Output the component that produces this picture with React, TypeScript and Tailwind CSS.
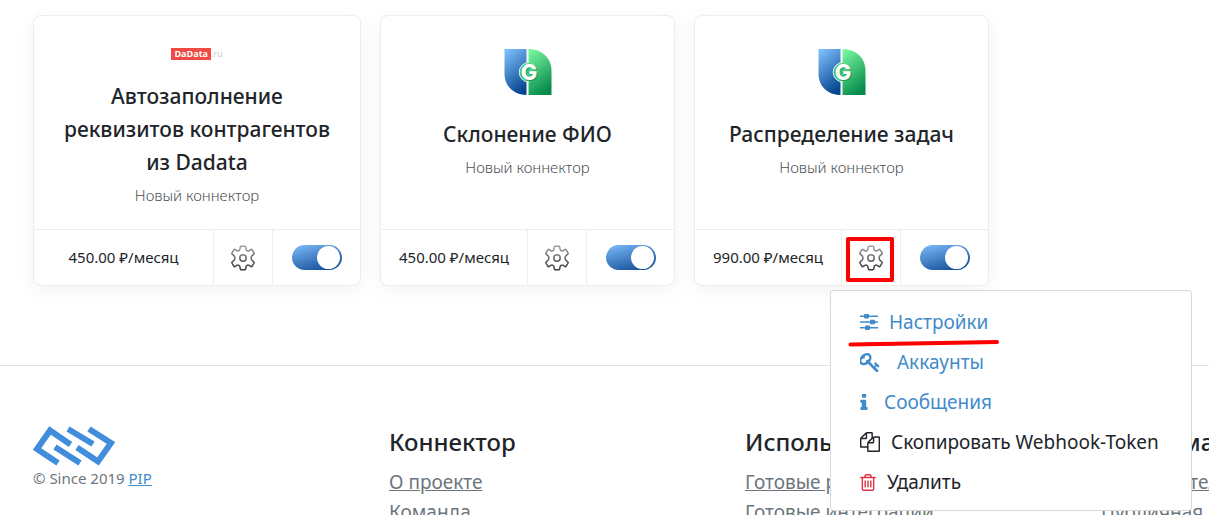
import React, { useId } from 'react';

type LogoKind = 'dadata' | 'google';

interface Connector {
  title: string;
  price: string;
  logo: LogoKind;
  width: string;
  menuOpen?: boolean;
}

const connectors: Connector[] = [
  { title: 'Автозаполнение реквизитов контрагентов из Dadata', price: '450.00 ₽/месяц', logo: 'dadata', width: 'w-[328px]' },
  { title: 'Склонение ФИО', price: '450.00 ₽/месяц', logo: 'google', width: 'w-[295px]' },
  { title: 'Распределение задач', price: '990.00 ₽/месяц', logo: 'google', width: 'w-[295px]', menuOpen: true },
];

const footerColumns = [
  { title: 'Коннектор', links: ['О проекте', 'Команда'] },
  { title: 'Использование', links: ['Готовые решения', 'Готовые интеграции'] },
  { title: 'Информация', links: ['Пользовательское соглашение', 'Публичная оферта'] },
];

const GearIcon: React.FC = () => {
  const id = useId();
  return (
    <svg viewBox="0 0 26 26" className="h-[26px] w-[26px]" fill="none" aria-hidden="true">
      <defs>
        <linearGradient id={id} x1="0" y1="0" x2="0" y2="26" gradientUnits="userSpaceOnUse">
          <stop offset="0" stopColor="#a3a3a3" />
          <stop offset="1" stopColor="#333333" />
        </linearGradient>
      </defs>
      <g stroke={`url(#${id})`} strokeWidth="1.5" strokeLinejoin="round">
        <path d="M11.2 1.200h3.600q.8 0 .9.800l.4 2.400q.2 1.100 1.300 1.400 1 .4 1.800-.2l1.800-1.100q.8-.4 1.200.3l1.800 3.100q.4.700-.2 1.200l-1.700 1.500q-1 .9-1 2.400t1 2.400l1.700 1.500q.6.500.2 1.200l-1.800 3.100q-.4.700-1.200.3l-1.800-1.100q-.8-.6-1.800-.2-1.100.3-1.300 1.400l-.4 2.400q-.1.800-.9.800h-3.600q-.8 0-.9-.8l-.4-2.400q-.2-1.100-1.300-1.400-1-.4-1.800.2l-1.800 1.100q-.8.400-1.200-.3l-1.800-3.100q-.4-.7.2-1.200l1.700-1.500q1-.9 1-2.400t-1-2.400l-1.700-1.500q-.6-.5-.2-1.200l1.800-3.100q.4-.7 1.200-.3l1.800 1.100q.8.600 1.800.2 1.100-.3 1.300-1.400l.4-2.400q.1-.8.900-.8z" />
        <circle cx="13" cy="13" r="3.200" />
      </g>
    </svg>
  );
};

const DadataLogo: React.FC = () => (
  <div className="flex h-3 items-center font-['Open_Sans',sans-serif] text-[9px] leading-3">
    <span className="bg-[#ef4a44] px-[3px] font-bold text-white">DaData</span>
    <span className="text-[#c9c9c9]">.ru</span>
  </div>
);

const GoogleLogo: React.FC = () => {
  const id = useId();
  return (
    <svg viewBox="0 0 48 48" className="h-12 w-12" aria-hidden="true">
      <defs>
        <linearGradient id={`${id}b`} x1="0.2" y1="0" x2="0.6" y2="1">
          <stop offset="0" stopColor="#7dbcfb" />
          <stop offset="1" stopColor="#04458f" />
        </linearGradient>
        <linearGradient id={`${id}g`} x1="0.2" y1="0" x2="0.6" y2="1">
          <stop offset="0" stopColor="#78f59d" />
          <stop offset="1" stopColor="#058a4b" />
        </linearGradient>
      </defs>
      <path d="M0.500 1h22v46C9.500 47 0.500 38 0.500 26z" fill={`url(#${id}b)`} />
      <path d="M24.500 1c13.500 0 23 9 23 22v24h-23z" fill={`url(#${id}g)`} />
      <path d="M25 14.500a9.800 9.800 0 0 0 0 19.600" fill="#3fc47c" stroke="#e4f7ec" strokeWidth="1" />
      <text x="26" y="33" textAnchor="middle" fontSize="22" fontWeight="800" fontFamily="Inter, sans-serif" fill="#0a7f48" opacity=".5">G</text>
      <text x="25" y="32" textAnchor="middle" fontSize="22" fontWeight="800" fontFamily="Inter, sans-serif" fill="#fff">G</text>
    </svg>
  );
};

const menuItems = [
  {
    label: 'Настройки',
    tone: 'text-[#428bca]',
    box: 'w-[18px]',
    icon: (
      <svg viewBox="0 0 18 16" className="h-4 w-[18px]" fill="currentColor">
        <path d="M0 1.500h18v1.400H0zM0 7.300h18v1.400H0zM0 13.100h18v1.400H0z" />
        <rect x="4" y="0" width="5" height="4.400" rx=".8" />
        <rect x="10" y="5.800" width="5" height="4.400" rx=".8" />
        <rect x="5" y="11.600" width="5" height="4.400" rx=".8" />
      </svg>
    ),
  },
  {
    label: 'Аккаунты',
    tone: 'text-[#428bca]',
    box: 'w-[26px]',
    icon: (
      <svg viewBox="109 128 1574 1574" className="h-[19px] w-5" fill="currentColor">
        <path d="M832 512q0-80-56-136t-136-56-136 56-56 136q0 42 19 83-41-19-83-19-80 0-136 56t-56 136 56 136 136 56 136-56 56-136q0-42-19-83 41 19 83 19 80 0 136-56t56-136zm851 704q0 17-49 66t-66 49q-9 0-28.500-16t-36.500-33-38.500-40-24.500-26l-96 96 220 220q28 28 28 68 0 42-39 81t-81 39q-40 0-68-28l-671-671q-176 131-365 131-163 0-265.500-102.500t-102.500-265.500q0-160 95-313t248-248 313-95q163 0 265.500 102.500t102.500 265.500q0 189-131 365l355 355 96-96q-3-3-26-24.500t-40-38.500-33-36.500-16-28.500q0-17 49-66t66-49q13 0 23 10 6 6 46 44.500t82 79.500 86.500 86 73 78 28.500 41z" />
      </svg>
    ),
  },
  {
    label: 'Сообщения',
    tone: 'text-[#428bca]',
    box: 'w-[13px]',
    icon: (
      <svg viewBox="576 128 640 1408" className="h-4 w-2" fill="currentColor">
        <path d="M1216 1344v128q0 26-19 45t-45 19h-512q-26 0-45-19t-19-45v-128q0-26 19-45t45-19h64v-384h-64q-26 0-45-19t-19-45v-128q0-26 19-45t45-19h384q26 0 45 19t19 45v576h64q26 0 45 19t19 45zm-128-1152v192q0 26-19 45t-45 19h-256q-26 0-45-19t-19-45v-192q0-26 19-45t45-19h256q26 0 45 19t19 45z" />
      </svg>
    ),
  },
  {
    label: 'Скопировать Webhook-Token',
    tone: 'text-[#212529]',
    box: 'w-5',
    icon: (
      <svg viewBox="0 0 1792 1792" className="h-5 w-5" fill="currentColor">
        <path d="M1696 384q40 0 68 28t28 68v1216q0 40-28 68t-68 28h-960q-40 0-68-28t-28-68v-288h-544q-40 0-68-28t-28-68v-672q0-40 20-88t48-76l408-408q28-28 76-48t88-20h416q40 0 68 28t28 68v328q68-40 128-40h416zm-544 213l-299 299h299v-299zm-640-384l-299 299h299v-299zm196 647l316-316v-416h-384v416q0 40-28 68t-68 28h-416v640h512v-256q0-40 20-88t48-76zm956 804v-1152h-384v416q0 40-28 68t-68 28h-416v640h896z" />
      </svg>
    ),
  },
  {
    label: 'Удалить',
    tone: 'text-[#212529]',
    box: 'w-4',
    icon: (
      <svg viewBox="192 128 1408 1536" className="h-[17px] w-4 text-[#dc3545]" fill="currentColor">
        <path d="M704 736v576q0 14-9 23t-23 9h-64q-14 0-23-9t-9-23v-576q0-14 9-23t23-9h64q14 0 23 9t9 23zm256 0v576q0 14-9 23t-23 9h-64q-14 0-23-9t-9-23v-576q0-14 9-23t23-9h64q14 0 23 9t9 23zm256 0v576q0 14-9 23t-23 9h-64q-14 0-23-9t-9-23v-576q0-14 9-23t23-9h64q14 0 23 9t9 23zm128 724v-948h-896v948q0 22 7 40.500t14.500 27 10.500 8.500h832q3 0 10.500-8.500t14.500-27 7-40.500zm-672-1076h448l-48-117q-7-9-17-11h-317q-10 2-17 11zm928 32v64q0 14-9 23t-23 9h-96v948q0 83-47 143.500t-113 60.500h-832q-66 0-113-58.500t-47-141.500v-952h-96q-14 0-23-9t-9-23v-64q0-14 9-23t23-9h309l70-167q15-37 54-63t79-26h320q40 0 79 26t54 63l70 167h309q14 0 23 9t9 23z" />
      </svg>
    ),
  },
];

const SettingsMenu: React.FC = () => (
  <div className="absolute -left-3 top-[60px] z-20 w-[362px] rounded-[4px] border border-black/15 bg-white pb-2 pt-[11px] text-[19px] leading-10">
    {menuItems.map((item) => (
      <button key={item.label} type="button" className={`flex h-10 w-full items-center gap-[11px] pl-[29px] ${item.tone}`}>
        <span className={`flex shrink-0 ${item.box}`}>{item.icon}</span>
        <span className="whitespace-nowrap">{item.label}</span>
      </button>
    ))}
    <svg viewBox="0 0 152 8" className="pointer-events-none absolute left-[17px] top-12 h-2 w-[152px]" fill="none">
      <path d="M2.500 5.500C50 5 100 4 149 3" stroke="#fe0000" strokeWidth="4" strokeLinecap="round" />
    </svg>
  </div>
);

const ConnectorCard: React.FC<{ connector: Connector }> = ({ connector }) => (
  <article
    className={`flex shrink-0 flex-col rounded-lg border border-[#ededed] bg-white shadow-[0_5px_20px_rgba(0,0,0,0.05)] ${connector.width}`}
  >
    <div className="flex h-[213px] flex-col items-center px-5 pt-8 text-center">
      {connector.logo === 'dadata' ? <DadataLogo /> : <GoogleLogo />}
      <h3
        className={`text-[21px] font-medium leading-[33px] text-[#212529] ${connector.logo === 'dadata' ? 'mt-5' : 'mt-[22px]'}`}
      >
        {connector.title}
      </h3>
      <p className="mt-1 text-[15px] font-light leading-6 text-[#4b5055]">Новый коннектор</p>
    </div>
    <div className="flex h-14 border-t border-[#ededed]">
      <div className="flex flex-1 items-center justify-center text-[15px] text-[#212529]">{connector.price}</div>
      <div className="relative flex w-[59px] border-l border-[#ededed]">
        <button type="button" aria-label="Настройки коннектора" className="flex flex-1 items-center justify-center">
          <GearIcon />
        </button>
        {connector.menuOpen && (
          <>
            <span className="pointer-events-none absolute bottom-[3px] left-1 right-1.5 top-[7px] rounded-[2px] border-4 border-[#fe0000]" />
            <SettingsMenu />
          </>
        )}
      </div>
      <label className="relative flex w-[88px] items-center justify-center border-l border-[#ededed]">
        <input
          type="checkbox"
          defaultChecked
          aria-label={connector.title}
          className="h-[25px] w-[50px] appearance-none rounded-full bg-linear-165 from-[#7dbcfb] to-[#04458f]"
        />
        <span className="pointer-events-none absolute right-5 h-[23px] w-[23px] rounded-full bg-white" />
      </label>
    </div>
  </article>
);

const BrandMark: React.FC = () => (
  <svg viewBox="0 0 82 40" className="h-10 w-[82px]" fill="none" stroke="#3f8ddb" strokeWidth="6" aria-hidden="true">
    <path d="M37.500 18.500 17 4.500 4 23 25 37" />
    <path d="M22 21 47 37M35 3 60 18" />
    <path d="M56 3 78 17 65 35.500 44 21.500" />
  </svg>
);

export default function App() {
  return (
    <div className="h-screen overflow-hidden bg-white font-['Noto_Sans','Open_Sans',sans-serif]">
      <main className="flex gap-[19px] pl-[33px] pt-[15px]">
        {connectors.map((connector) => (
          <ConnectorCard key={connector.title} connector={connector} />
        ))}
      </main>
      <footer className="mt-[79px] flex border-t border-[#dee2e6] pl-[33px] pt-[60px]">
        <div className="w-[356px] shrink-0">
          <BrandMark />
          <p className="text-[15px] leading-6 text-[#6c757d]">
            © Since 2019 <a href="#pip" className="text-[#428bca] underline">PIP</a>
          </p>
        </div>
        {footerColumns.map((column) => (
          <div key={column.title} className="w-[356px] shrink-0">
            <h4 className="text-2xl font-medium leading-8 text-[#212529]">{column.title}</h4>
            <ul className="mt-[9px] text-[19px] leading-[30px] text-[#6c757d]">
              {column.links.map((link) => (
                <li key={link}>
                  <a href="#link" className="whitespace-nowrap underline">{link}</a>
                </li>
              ))}
            </ul>
          </div>
        ))}
      </footer>
    </div>
  );
}
